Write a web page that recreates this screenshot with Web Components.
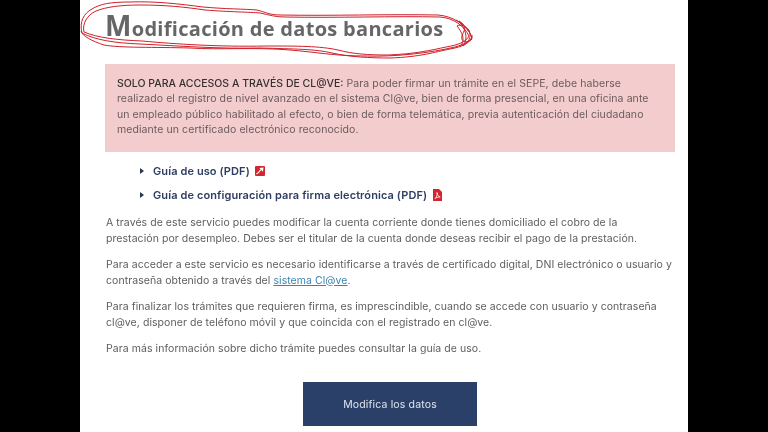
<!DOCTYPE html>
<html lang="es">
<head>
<meta charset="utf-8">
<title>Modificación de datos bancarios</title>
<style>
  html, body { margin: 0; height: 432px; overflow: hidden; background: #000; }
  body { font-family: Inter, "Noto Sans", sans-serif; }
</style>
</head>
<body>
<sepe-page>
  <page-title>Modificación de datos bancarios</page-title>
  <alert-box><strong>SOLO PARA ACCESOS A TRAVÉS DE CL@VE:</strong> Para poder firmar un trámite en el SEPE, debe haberse<br>realizado el registro de nivel avanzado en el sistema Cl@ve, bien de forma presencial, en una oficina ante<br>un empleado público habilitado al efecto, o bien de forma telemática, previa autenticación del ciudadano<br>mediante un certificado electrónico reconocido.</alert-box>
  <doc-link kind="external">Guía de uso (PDF)</doc-link>
  <doc-link kind="pdf">Guía de configuración para firma electrónica (PDF)</doc-link>
  <body-text>A través de este servicio puedes modificar la cuenta corriente donde tienes domiciliado el cobro de la<br>prestación por desempleo. Debes ser el titular de la cuenta donde deseas recibir el pago de la prestación.</body-text>
  <body-text>Para acceder a este servicio es necesario identificarse a través de certificado digital, DNI electrónico o usuario y<br>contraseña obtenido a través del <a href="#">sistema Cl@ve</a>.</body-text>
  <body-text>Para finalizar los trámites que requieren firma, es imprescindible, cuando se accede con usuario y contraseña<br>cl@ve, disponer de teléfono móvil y que coincida con el registrado en cl@ve.</body-text>
  <body-text>Para más información sobre dicho trámite puedes consultar la guía de uso.</body-text>
  <action-button>Modifica los datos</action-button>
</sepe-page>

<script>
class SepePage extends HTMLElement {
  constructor() {
    super();
    this.attachShadow({ mode: 'open' });
    this.shadowRoot.innerHTML = `
      <style>
        :host {
          display: block;
          box-sizing: border-box;
          width: 608px;
          height: 432px;
          margin-left: 80px;
          padding: 0 13px 0 25px;
          background: #fff;
          overflow: hidden;
          filter: blur(.3px);
        }
      </style>
      <slot></slot>
    `;
  }
}

class PageTitle extends HTMLElement {
  constructor() {
    super();
    this.attachShadow({ mode: 'open' });
    this.shadowRoot.innerHTML = `
      <style>
        :host {
          display: block;
          position: relative;
          height: 64px;
          margin-left: -25px;
          color: #666;
        }
        h1 {
          margin: 0;
          padding: 10px 0 0 25px;
          font: 700 20px/30px "Open Sans", "Noto Sans", sans-serif;
          letter-spacing: .3px;
          white-space: nowrap;
        }
        h1::first-letter { font-size: 28px; }
        svg { position: absolute; left: -10px; top: 0; overflow: visible; }
        path { fill: none; stroke: #cf2029; stroke-width: 1; stroke-linejoin: round; }
      </style>
      <h1><slot></slot></h1>
      <svg width="420" height="60" viewBox="0 0 420 60" aria-hidden="true">
        <path d="M12 33C9 22 14 13 22 9C30 4 40 2 60 2C85 1 110 4 133 7C155 9 175 9 187 10C195 12 200 15 210 15C260 16 320 14 368 15C382 16 396 24 402 37C400 43 392 47 380 49C365 52 350 57 320 58C300 58 280 57 262 53C245 49 225 49 190 48C150 49 110 46 70 44C45 43 25 40 12 33Z"/>
        <path d="M14 32C12 24 17 15 26 11C36 7 50 5 70 5C95 5 115 7 135 10C160 12 180 12 190 13C200 15 205 17 215 17C265 18 325 16 370 17C384 18 394 26 399 36C396 42 388 45 376 47C362 50 345 54 318 55C298 55 283 54 268 50C250 46 228 46 195 46C150 47 105 44 72 41C48 40 28 38 14 32Z"/>
        <path d="M11 31C12 36 22 41 34 45C50 48 85 47 120 48C150 50 185 47 220 50C245 52 265 56 295 56C325 57 360 53 385 47C395 44 403 40 402 35"/>
        <path d="M386 20C394 24 401 32 402 39C398 44 390 42 392 36C394 30 398 26 389 21C395 28 399 38 393 46C398 42 402 38 399 30C396 26 391 24 387 26C392 32 396 40 390 47"/>
      </svg>
    `;
  }
}

class AlertBox extends HTMLElement {
  constructor() {
    super();
    this.attachShadow({ mode: 'open' });
    this.shadowRoot.innerHTML = `
      <style>
        :host {
          display: block;
          box-sizing: border-box;
          height: 88px;
          margin-bottom: 7px;
          padding: 12px 12px;
          background: #f3cdcd;
          color: #6b5a5c;
          font: 400 10.5px/15.4px Inter, "Noto Sans", sans-serif;
          letter-spacing: .08px;
          white-space: nowrap;
        }
        ::slotted(strong) { font-weight: 500; color: #37302f; letter-spacing: 0; }
      </style>
      <slot></slot>
    `;
  }
}

class DocLink extends HTMLElement {
  constructor() {
    super();
    this.attachShadow({ mode: 'open' });
    const icon = this.getAttribute('kind') === 'pdf'
      ? `<svg width="9" height="12" viewBox="0 0 9 12"><path fill="#d4262e" d="M0 0h6l3 3v9H0z"/><path fill="none" stroke="#fff" stroke-width=".8" d="M2 9.500C3.500 8.500 4.500 6 4 3.500 4.500 6.500 5.500 7.500 7.200 8 5.500 8 3.500 8.500 2 9.500Z"/></svg>`
      : `<svg width="10" height="10" viewBox="0 0 10 10" style="margin-left:5px"><rect width="10" height="10" rx="1" fill="#d4262e"/><path fill="none" stroke="#fff" stroke-width="1.200" d="M1.500 8C3 7 5 5 5.800 3.400"/><path fill="#fff" d="M4.300 2 8.500 1.500 8 5.700Z"/></svg>`;
    this.shadowRoot.innerHTML = `
      <style>
        :host {
          display: flex;
          align-items: center;
          height: 24px;
          padding-left: 35px;
          color: #2e3d63;
          font: 600 11px/24px Inter, "Noto Sans", sans-serif;
          letter-spacing: .1px;
          white-space: nowrap;
        }
        :host(:last-of-type) { margin-bottom: 8px; }
        i {
          width: 0;
          height: 0;
          margin-right: 9px;
          border-left: 4px solid #2a3550;
          border-top: 3.500px solid transparent;
          border-bottom: 3.500px solid transparent;
        }
        svg { margin-left: 6px; }
      </style>
      <i></i><slot></slot>${icon}
    `;
  }
}

class BodyText extends HTMLElement {
  constructor() {
    super();
    this.attachShadow({ mode: 'open' });
    this.shadowRoot.innerHTML = `
      <style>
        :host {
          display: block;
          margin: 0 0 11px 1px;
          color: #5d5d5d;
          font: 400 10.5px/15.500px Inter, "Noto Sans", sans-serif;
          letter-spacing: .06px;
          white-space: nowrap;
        }
        ::slotted(a) { color: #3e83ad; }
      </style>
      <slot></slot>
    `;
  }
}

class ActionButton extends HTMLElement {
  constructor() {
    super();
    this.attachShadow({ mode: 'open' });
    this.shadowRoot.innerHTML = `
      <style>
        :host {
          display: flex;
          justify-content: center;
          margin-top: 25px;
        }
        button {
          width: 174px;
          height: 44px;
          padding: 2px 0 0;
          border: 0;
          border-radius: 0;
          background: #2a4068;
          color: #dfe5ef;
          font: 400 10.5px Inter, "Noto Sans", sans-serif;
          letter-spacing: .15px;
        }
      </style>
      <button><slot></slot></button>
    `;
  }
}

customElements.define('sepe-page', SepePage);
customElements.define('page-title', PageTitle);
customElements.define('alert-box', AlertBox);
customElements.define('doc-link', DocLink);
customElements.define('body-text', BodyText);
customElements.define('action-button', ActionButton);
</script>
</body>
</html>
